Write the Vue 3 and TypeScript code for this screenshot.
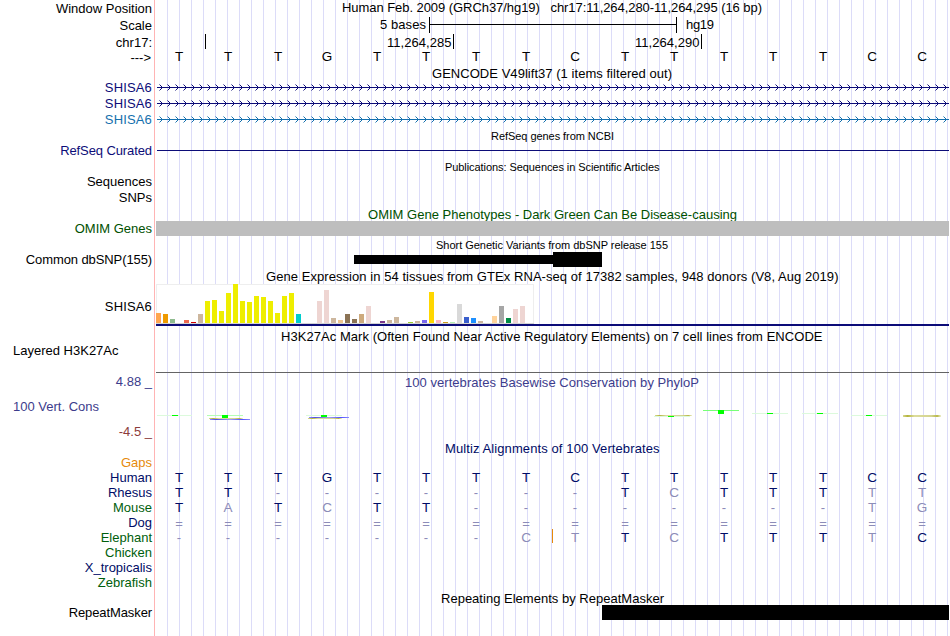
<script setup lang="ts">
interface Bar {
  slot: number
  height: number
  color: string
}

interface Species {
  name: string
  color: string
  bases: string
  // 1 = matches human, 0 = drawn dimmed
  match: string
}

interface Segment {
  x: number
  y: number
  w: number
  h: number
  fill: string
}

const LEFT = 156
const WIDTH = 793
const BASE_STEP = 49.56

const position = 'Human Feb. 2009 (GRCh37/hg19)\u00a0\u00a0 chr17:11,264,280-11,264,295 (16 bp)'
const sequence = 'TTTGTTTTCTTTTTCC'.split('')
const baseX = (i: number) => Math.round(178.6 + i * BASE_STEP)
const box = (height: number) => `${LEFT} 0 ${WIDTH} ${height}`

const chevrons = (() => {
  let d = ''
  for (let x = 159.5; x < 949; x += 8) {
    d += `M${x} 4.5l3 3l-3 3`
  }
  return d
})()

const genes = [
  { name: 'SHISA6', color: '#0c0c78' },
  { name: 'SHISA6', color: '#0c0c78' },
  { name: 'SHISA6', color: '#1470ae' },
]

const yellow = '#eeee00'
const beige = '#cdb79e'
const rose = '#eed5d2'

const tissues: [number, number, string][] = [
  [0, 10, '#ffa54f'], [1, 9, '#ee9a00'], [2, 4, '#8fbc8f'], [4, 3, '#ee6a50'],
  [5, 1, '#cd0000'], [6, 9, beige], [7, 22, yellow], [8, 23, yellow],
  [9, 12, yellow], [10, 30, yellow], [11, 39, yellow], [12, 22, yellow],
  [13, 21, yellow], [14, 27, yellow], [15, 26, yellow], [16, 22, yellow],
  [17, 10, yellow], [18, 27, yellow], [19, 30, yellow], [20, 9, '#00cdcd'],
  [23, 22, rose], [24, 33, rose], [25, 5, beige], [26, 3, '#eec591'],
  [27, 9, '#8b7355'], [28, 4, '#8b7355'], [29, 9, '#cdaa7d'], [30, 17, rose],
  [32, 2, '#7a378b'], [33, 3, beige], [34, 6, beige], [36, 1, '#9acd32'],
  [37, 2, beige], [38, 3, '#7a67ee'], [39, 31, '#ffd700'], [40, 3, '#ffb6c1'],
  [41, 1, '#cd9b1d'], [42, 1, '#b4eeb4'], [43, 19, '#d9d9d9'], [44, 6, '#3a5fcd'],
  [45, 5, '#1e90ff'], [46, 2, beige], [48, 7, '#ffd39b'], [49, 17, '#a6a6a6'],
  [50, 5, '#008b45'], [51, 14, rose], [52, 17, rose],
]
const bars: Bar[] = tissues.map(([slot, height, color]) => ({ slot, height, color }))

const pale = '#dcfadc'
const green = '#00ff00'
const conservation: Segment[] = [
  { x: 157, y: 41, w: 35, h: 1, fill: pale },
  { x: 172, y: 41, w: 6, h: 1, fill: green },
  { x: 207, y: 41, w: 36, h: 1, fill: '#b4ffb4' },
  { x: 222, y: 41, w: 6, h: 3, fill: green },
  { x: 209, y: 44, w: 34, h: 1, fill: 'url(#olive)' },
  { x: 210, y: 45, w: 40, h: 1, fill: 'url(#blue)' },
  { x: 306, y: 41, w: 36, h: 1, fill: pale },
  { x: 321, y: 41, w: 6, h: 2, fill: green },
  { x: 309, y: 43, w: 40, h: 1, fill: 'url(#blue)' },
  { x: 308, y: 44, w: 34, h: 1, fill: 'url(#olive)' },
  { x: 655, y: 41, w: 37, h: 1, fill: 'url(#olive)' },
  { x: 654, y: 42, w: 36, h: 1, fill: pale },
  { x: 668, y: 42, w: 6, h: 1, fill: green },
  { x: 703, y: 36, w: 36, h: 1, fill: '#78ff78' },
  { x: 718, y: 36, w: 6, h: 4, fill: green },
  { x: 752, y: 39, w: 36, h: 1, fill: pale },
  { x: 767, y: 39, w: 6, h: 1, fill: green },
  { x: 802, y: 39, w: 36, h: 1, fill: pale },
  { x: 817, y: 39, w: 6, h: 1, fill: green },
  { x: 851, y: 41, w: 36, h: 1, fill: pale },
  { x: 866, y: 41, w: 6, h: 1, fill: green },
  { x: 903, y: 41, w: 38, h: 2, fill: 'url(#olive)' },
]

const navy = '#000c66'
const forest = '#005e0c'
const species: Species[] = [
  { name: 'Gaps', color: '#e68a0a', bases: '', match: '' },
  { name: 'Human', color: navy, bases: 'TTTGTTTTCTTTTTCC', match: '1111111111111111' },
  { name: 'Rhesus', color: navy, bases: 'TT-------TCTTTTT', match: '1100000001011100' },
  { name: 'Mouse', color: forest, bases: 'TATCTT--------TG', match: '1010110000000000' },
  { name: 'Dog', color: navy, bases: '================', match: '0000000000000000' },
  { name: 'Elephant', color: forest, bases: '-------CTTCTTTTC', match: '0000000001011101' },
  { name: 'Chicken', color: forest, bases: '', match: '' },
  { name: 'X_tropicalis', color: navy, bases: '', match: '' },
  { name: 'Zebrafish', color: forest, bases: '', match: '' },
]
</script>

<template>
  <main class="browser">
    <div class="row h17">
      <div class="label drop">Window Position</div>
      <svg class="track" :viewBox="box(17)">
        <text x="342" y="12" textLength="420">{{ position }}</text>
      </svg>
    </div>
    <div class="row h17">
      <div class="label drop">Scale</div>
      <svg class="track" :viewBox="box(17)">
        <text x="380" y="12" textLength="46">5 bases</text>
        <path class="tick" d="M429.5 0V16M429 7.5H677M676.5 0V16" />
        <text x="686" y="12" textLength="28">hg19</text>
      </svg>
    </div>
    <div class="row h16">
      <div class="label drop">chr17:</div>
      <svg class="track" :viewBox="box(16)">
        <path class="tick" d="M205.5 0V15M453.5 0V15M701.5 0V15" />
        <text x="387" y="13" textLength="64.5">11,264,285</text>
        <text x="635" y="13" textLength="64.5">11,264,290</text>
      </svg>
    </div>
    <div class="row h16">
      <div class="label inset">---&gt;</div>
      <svg class="track bases" :viewBox="box(16)">
        <text v-for="(base, i) in sequence" :key="i" :x="baseX(i)" y="11">{{ base }}</text>
      </svg>
    </div>

    <div class="row h14">
      <div class="label"></div>
      <svg class="track" :viewBox="box(14)">
        <text x="432" y="12" textLength="240">GENCODE V49lift37 (1 items filtered out)</text>
      </svg>
    </div>
    <div v-for="(gene, i) in genes" :key="i" class="row h16" :style="{ color: gene.color }">
      <div class="label wide">{{ gene.name }}</div>
      <svg class="track gene" :viewBox="box(16)">
        <path class="intron" d="M157 7.5H949" />
        <path class="chevrons" :d="chevrons" />
      </svg>
    </div>

    <div class="row h15">
      <div class="label"></div>
      <svg class="track small" :viewBox="box(15)">
        <text x="491" y="12" textLength="123">RefSeq genes from NCBI</text>
      </svg>
    </div>
    <div class="row h16 refseq">
      <div class="label narrow">RefSeq Curated</div>
      <svg class="track" :viewBox="box(16)">
        <path class="intron" d="M157 7.5H949" />
      </svg>
    </div>

    <div class="row h15">
      <div class="label"></div>
      <svg class="track small" :viewBox="box(15)">
        <text x="445" y="12" textLength="214.5">Publications: Sequences in Scientific Articles</text>
      </svg>
    </div>
    <div class="row h16">
      <div class="label">Sequences</div>
    </div>
    <div class="row h17">
      <div class="label">SNPs</div>
    </div>

    <div class="row h14 omim">
      <div class="label"></div>
      <svg class="track clip" :viewBox="box(14)">
        <text x="368" y="12" textLength="369">OMIM Gene Phenotypes - Dark Green Can Be Disease-causing</text>
      </svg>
    </div>
    <div class="row h15 omim">
      <div class="label">OMIM Genes</div>
      <svg class="track" :viewBox="box(15)">
        <rect x="156" y="0" width="793" height="15" fill="#bebebe" />
      </svg>
    </div>

    <div class="row h16">
      <div class="label"></div>
      <svg class="track small" :viewBox="box(16)">
        <text x="436" y="13" textLength="232">Short Genetic Variants from dbSNP release 155</text>
      </svg>
    </div>
    <div class="row h15">
      <div class="label narrow">Common dbSNP(155)</div>
      <svg class="track" :viewBox="box(15)">
        <rect x="354" y="3" width="199" height="9" />
        <rect x="553" y="0" width="49" height="15" />
      </svg>
    </div>

    <div class="row h17">
      <div class="label"></div>
      <svg class="track" :viewBox="box(17)">
        <text x="266" y="14" textLength="572.5">Gene Expression in 54 tissues from GTEx RNA-seq of 17382 samples, 948 donors (V8, Aug 2019)</text>
      </svg>
    </div>
    <div class="row h42">
      <div class="label gtex-label wide">SHISA6</div>
      <svg class="track" :viewBox="box(42)">
        <rect x="156.5" y="0.5" width="377" height="39" fill="#fff" stroke="#eeeeee" />
        <rect x="156" y="39" width="378" height="1" fill="#d3d3d3" />
        <rect
          v-for="bar in bars"
          :key="bar.slot"
          :x="LEFT + bar.slot * 7"
          :y="39 - bar.height"
          width="5"
          :height="bar.height"
          :fill="bar.color"
        />
        <rect x="156" y="40" width="793" height="2" fill="#0c0c78" />
      </svg>
    </div>

    <div class="row h17">
      <div class="label"></div>
      <svg class="track" :viewBox="box(17)">
        <text x="281" y="15" textLength="541.5">H3K27Ac Mark (Often Found Near Active Regulatory Elements) on 7 cell lines from ENCODE</text>
      </svg>
    </div>
    <div class="row h31">
      <div class="label left">Layered H3K27Ac</div>
      <svg class="track" :viewBox="box(31)">
        <path d="M156 29.5H949" stroke="#646464" />
      </svg>
    </div>

    <div class="row h67 phylop">
      <div class="label axis">
        <span>4.88 _</span>
        <span class="axis-name">100 Vert. Cons</span>
        <span class="low">-4.5 _</span>
      </div>
      <svg class="track" :viewBox="box(67)">
        <defs>
          <linearGradient id="olive">
            <stop offset="0" stop-color="#d8d890" />
            <stop offset="0.12" stop-color="#b4b43c" />
            <stop offset="0.3" stop-color="#dcdc9c" />
            <stop offset="0.75" stop-color="#d4d490" />
            <stop offset="0.9" stop-color="#b8b848" />
            <stop offset="1" stop-color="#f0f0d0" />
          </linearGradient>
          <linearGradient id="blue">
            <stop offset="0" stop-color="#8c8cff" />
            <stop offset="0.15" stop-color="#5050e0" />
            <stop offset="0.5" stop-color="#a0a0f0" />
            <stop offset="0.8" stop-color="#5050ff" />
            <stop offset="1" stop-color="#8c8cff" />
          </linearGradient>
        </defs>
        <text x="405" y="13" textLength="294">100 vertebrates Basewise Conservation by PhyloP</text>
        <rect
          v-for="(s, i) in conservation"
          :key="i"
          :x="s.x"
          :y="s.y"
          :width="s.w"
          :height="s.h"
          :fill="s.fill"
        />
      </svg>
    </div>

    <div class="row h14 multiz">
      <div class="label"></div>
      <svg class="track" :viewBox="box(14)">
        <text x="445" y="12" textLength="214.5">Multiz Alignments of 100 Vertebrates</text>
      </svg>
    </div>
    <div v-for="s in species" :key="s.name" class="row h15">
      <div class="label" :style="{ color: s.color }">{{ s.name }}</div>
      <svg class="track bases aligned" :viewBox="box(15)">
        <text
          v-for="(base, i) in s.bases.split('')"
          :key="i"
          :class="{ dim: s.match[i] === '0', gap: base === '-' || base === '=' }"
          :x="baseX(i)"
          :y="base === '=' ? 13 : 12"
        >{{ base }}</text>
        <path v-if="s.name === 'Elephant'" d="M552.5 -1V13" stroke="#e68a0a" />
      </svg>
    </div>

    <div class="row h15">
      <div class="label"></div>
      <svg class="track" :viewBox="box(15)">
        <text x="441" y="13" textLength="223">Repeating Elements by RepeatMasker</text>
      </svg>
    </div>
    <div class="row h15">
      <div class="label narrow">RepeatMasker</div>
      <svg class="track" :viewBox="box(15)">
        <rect x="602" y="0" width="347" height="15" />
      </svg>
    </div>
  </main>
</template>

<style>
body {
  margin: 0;
  background: #fff;
}
</style>

<style scoped>
.browser {
  box-sizing: border-box;
  width: 949px;
  height: 636px;
  overflow: hidden;
  font-family: "Liberation Sans", Arial, sans-serif;
  font-size: 13px;
  line-height: 15px;
  color: #000;
  /* pink label divider, then guide lines every 12px */
  background:
    linear-gradient(#ffb4b4, #ffb4b4) 154px 0 / 1px 100% no-repeat,
    linear-gradient(90deg, #fff, #fff) 0 0 / 156px 100% no-repeat,
    repeating-linear-gradient(90deg, #dcdcf8 0 1px, transparent 1px 12px) 11px 0;
}

.row {
  display: grid;
  grid-template-columns: 152px 793px;
  column-gap: 4px;
}

.h14 { height: 14px; }
.h15 { height: 15px; }
.h16 { height: 16px; }
.h17 { height: 17px; }
.h31 { height: 31px; }
.h42 { height: 42px; }
.h67 { height: 67px; }

.label {
  text-align: right;
  white-space: nowrap;
}

.label.drop {
  padding-top: 1px;
}

.label.inset {
  padding-right: 1px;
}

.label.left {
  padding-left: 13px;
  text-align: left;
}

.label.wide {
  letter-spacing: 0.15px;
}

.label.narrow {
  letter-spacing: -0.1px;
}

.gtex-label {
  padding-top: 15px;
}

.track {
  display: block;
  width: 793px;
  height: 100%;
  overflow: visible;
  fill: currentColor;
}

.track.clip {
  overflow: hidden;
}

.small {
  font-size: 11px;
}

.bases text {
  font-size: 13.5px;
  text-anchor: middle;
}

.bases .gap {
  font-size: 13px;
}

.tick {
  fill: none;
  stroke: #000;
}

.intron {
  fill: none;
  stroke: currentColor;
}

.chevrons {
  fill: none;
  stroke: currentColor;
  stroke-width: 1;
}

.refseq {
  color: #0c0c78;
}

.omim {
  color: #005000;
}

.phylop {
  color: #3c3c8c;
}

.axis {
  display: flex;
  flex-direction: column;
  gap: 10px;
}

.axis-name {
  padding-left: 13px;
  text-align: left;
}

.low {
  color: #8c3c3c;
}

.multiz,
.aligned {
  color: #000c66;
}

.bases .dim {
  fill: #8c8cb8;
}
</style>
